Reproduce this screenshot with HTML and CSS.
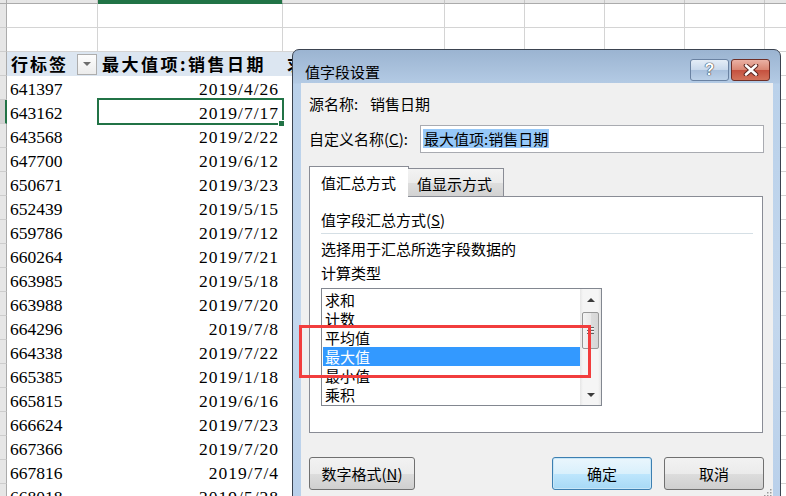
FILE: index.html
```html
<!DOCTYPE html>
<html lang="zh-CN">
<head>
<meta charset="utf-8">
<title>值字段设置</title>
<link rel="stylesheet" href="styles.css">
</head>
<body>
<div class="sheet">
  <div class="colheads">
    <div class="rh"></div><div class="ca"></div><div class="cb on"></div><div class="cc"></div><div class="rest"></div>
  </div>
  <div class="row"><div class="rh"></div><div class="ca grid"></div><div class="cb grid"></div><div class="cc grid"></div><div class="rest"></div></div>
  <div class="row"><div class="rh"></div><div class="ca grid"></div><div class="cb grid"></div><div class="cc grid"></div><div class="rest"></div></div>
  <div class="row"><div class="rh"></div>
    <div class="ca ph hd"><span>行标签</span><span class="dd"><span class="tri"></span></span></div>
    <div class="cb ph hd">最大值项:销售日期</div>
    <div class="cc ph hd">求</div><div class="rest"></div></div>
  <div class="row"><div class="rh"></div><div class="ca num">641397</div><div class="cb date">2019/4/26</div><div class="cc"></div><div class="rest"></div></div>
  <div class="row"><div class="rh on"></div><div class="ca num">643162</div><div class="cb date cur">2019/7/17</div><div class="cc"></div><div class="rest"></div></div>
  <div class="row"><div class="rh"></div><div class="ca num">643568</div><div class="cb date">2019/2/22</div><div class="cc"></div><div class="rest"></div></div>
  <div class="row"><div class="rh"></div><div class="ca num">647700</div><div class="cb date">2019/6/12</div><div class="cc"></div><div class="rest"></div></div>
  <div class="row"><div class="rh"></div><div class="ca num">650671</div><div class="cb date">2019/3/23</div><div class="cc"></div><div class="rest"></div></div>
  <div class="row"><div class="rh"></div><div class="ca num">652439</div><div class="cb date">2019/5/15</div><div class="cc"></div><div class="rest"></div></div>
  <div class="row"><div class="rh"></div><div class="ca num">659786</div><div class="cb date">2019/7/12</div><div class="cc"></div><div class="rest"></div></div>
  <div class="row"><div class="rh"></div><div class="ca num">660264</div><div class="cb date">2019/7/21</div><div class="cc"></div><div class="rest"></div></div>
  <div class="row"><div class="rh"></div><div class="ca num">663985</div><div class="cb date">2019/5/18</div><div class="cc"></div><div class="rest"></div></div>
  <div class="row"><div class="rh"></div><div class="ca num">663988</div><div class="cb date">2019/7/20</div><div class="cc"></div><div class="rest"></div></div>
  <div class="row"><div class="rh"></div><div class="ca num">664296</div><div class="cb date">2019/7/8</div><div class="cc"></div><div class="rest"></div></div>
  <div class="row"><div class="rh"></div><div class="ca num">664338</div><div class="cb date">2019/7/22</div><div class="cc"></div><div class="rest"></div></div>
  <div class="row"><div class="rh"></div><div class="ca num">665385</div><div class="cb date">2019/1/18</div><div class="cc"></div><div class="rest"></div></div>
  <div class="row"><div class="rh"></div><div class="ca num">665815</div><div class="cb date">2019/6/16</div><div class="cc"></div><div class="rest"></div></div>
  <div class="row"><div class="rh"></div><div class="ca num">666624</div><div class="cb date">2019/7/23</div><div class="cc"></div><div class="rest"></div></div>
  <div class="row"><div class="rh"></div><div class="ca num">667366</div><div class="cb date">2019/7/20</div><div class="cc"></div><div class="rest"></div></div>
  <div class="row"><div class="rh"></div><div class="ca num">667816</div><div class="cb date">2019/7/4</div><div class="cc"></div><div class="rest"></div></div>
  <div class="row"><div class="rh"></div><div class="ca num">668018</div><div class="cb date">2019/5/28</div><div class="cc"></div><div class="rest"></div></div>
</div>

<div class="dialog">
  <div class="titlebar">
    <span class="title">值字段设置</span>
    <div class="capbtns">
      <div class="capbtn help">?</div>
      <div class="capbtn close">
        <svg width="16" height="12" viewBox="0 0 16 12">
          <path d="M3 1.5 L13 10.5 M13 1.5 L3 10.5" stroke="#5a2620" stroke-width="4.6" stroke-linecap="round"/>
          <path d="M3 1.5 L13 10.5 M13 1.5 L3 10.5" stroke="#ffffff" stroke-width="2.6" stroke-linecap="round"/>
        </svg>
      </div>
    </div>
  </div>
  <div class="client">
    <div class="src"><span class="lbl">源名称:</span><span>销售日期</span></div>
    <div class="namerow">
      <span class="nlbl">自定义名称(<u>C</u>):</span>
      <div class="input"><span class="selected">最大值项:销售日期</span></div>
    </div>
    <div class="tabs">
      <div class="tab active">值汇总方式</div>
      <div class="tab inactive">值显示方式</div>
    </div>
    <div class="panel">
      <div class="group">值字段汇总方式(<u>S</u>)</div>
      <div class="sep"></div>
      <div class="desc">选择用于汇总所选字段数据的<br>计算类型</div>
      <div class="listbox">
        <ul class="items">
          <li>求和</li>
          <li>计数</li>
          <li>平均值</li>
          <li class="sel">最大值</li>
          <li>最小值</li>
          <li>乘积</li>
        </ul>
        <div class="vscroll">
          <div class="arr"><span class="up"></span></div>
          <div class="thumb"><span class="gripl"></span></div>
          <div class="track"></div>
          <div class="arr"><span class="down"></span></div>
        </div>
      </div>
    </div>
    <div class="buttons">
      <button class="btn numfmt">数字格式(<u>N</u>)</button>
      <button class="btn ok">确定</button>
      <button class="btn cancel">取消</button>
    </div>
    <svg class="grip" width="10" height="10" viewBox="0 0 10 10">
      <rect x="8" y="2" width="1.5" height="1.5" fill="#9a9a9a"/>
      <rect x="5" y="5" width="1.5" height="1.5" fill="#9a9a9a"/>
      <rect x="8" y="5" width="1.5" height="1.5" fill="#9a9a9a"/>
      <rect x="2" y="8" width="1.5" height="1.5" fill="#9a9a9a"/>
      <rect x="5" y="8" width="1.5" height="1.5" fill="#9a9a9a"/>
      <rect x="8" y="8" width="1.5" height="1.5" fill="#9a9a9a"/>
    </svg>
  </div>
</div>

<div class="annot"></div>
</body>
</html>
```

FILE: styles.css
```css
html, body {
  margin: 0;
  padding: 0;
}
body {
  width: 786px;
  height: 496px;
  overflow: hidden;
  position: relative;
  background: #ffffff;
  font-family: "Noto Sans CJK SC", "Liberation Sans", sans-serif;
  color: #000;
}

/* ---------- spreadsheet ---------- */
.sheet {
  display: flex;
  flex-direction: column;
}
.colheads {
  display: flex;
  height: 4px;
  flex: none;
}
.colheads > div {
  height: 4px;
  box-sizing: border-box;
  border-bottom: 1px solid #ababab;
  border-right: 1px solid #c6c6c6;
  background: #e6e6e6;
  flex: none;
}
.colheads .on {
  background: #217346;
  border-bottom-color: #217346;
}
.colheads .rest {
  flex: 1;
  background: linear-gradient(to left, #c6c6c6 1px, #e6e6e6 1px) 0 0 / 80px 100% repeat-x;
  border-right: none;
}
.row {
  display: flex;
  height: 24px;
  flex: none;
}
.row > div {
  box-sizing: border-box;
  height: 24px;
  flex: none;
}
.rh {
  width: 7px;
  background: #e6e6e6;
  border-right: 1px solid #ababab;
  border-bottom: 1px solid #cdcdcd;
}
.row .rh.on {
  background: #d2d2d2;
  border-right: 2px solid #217346;
}
.colheads .rh {
  width: 7px;
  border-right-color: #ababab;
}
.ca { width: 91px; }
.cb { width: 185px; }
.cc { width: 162px; }
.grid {
  border-right: 1px solid #d4d4d4;
  border-bottom: 1px solid #d4d4d4;
}
.row .rest {
  flex: 1;
  border-bottom: 1px solid #d4d4d4;
  background: linear-gradient(to left, #d4d4d4 1px, transparent 1px) 0 0 / 80px 100% repeat-x;
}
.ph {
  background: #dce6f1;
}
.hd {
  font-family: "Noto Sans CJK SC", sans-serif;
  font-weight: 700;
  font-size: 17px;
  letter-spacing: 2.5px;
  line-height: 24px;
  padding-left: 4px;
  white-space: nowrap;
  overflow: hidden;
}
.row .ca.hd {
  display: flex;
  justify-content: space-between;
  align-items: center;
  padding-right: 1px;
  letter-spacing: 2px;
}
.dd {
  width: 20px;
  height: 21px;
  box-sizing: border-box;
  border: 1px solid #adadad;
  background: linear-gradient(#fdfdfd, #ececec);
  display: flex;
  align-items: center;
  justify-content: center;
}
.tri {
  width: 0;
  height: 0;
  border-left: 4px solid transparent;
  border-right: 4px solid transparent;
  border-top: 4px solid #6d6d6d;
}
.num, .date {
  font-family: "Liberation Serif", serif;
  font-size: 17.5px;
  line-height: 26px;
  white-space: nowrap;
}
.num {
  padding-left: 3px;
}
.date {
  text-align: right;
  padding-right: 4px;
  letter-spacing: 1px;
}
.cur {
  position: relative;
}
.cur::after {
  content: "";
  position: absolute;
  top: -2px;
  left: -1px;
  right: -1px;
  bottom: -1px;
  border: 2px solid #217346;
}
.cur::before {
  content: "";
  position: absolute;
  right: -2px;
  bottom: -3px;
  width: 5px;
  height: 5px;
  background: #217346;
  border: 1px solid #fff;
  z-index: 1;
}

/* ---------- dialog ---------- */
.dialog {
  position: absolute;
  left: 292px;
  top: 49px;
  width: 489px;
  height: 457px;
  box-sizing: border-box;
  border: 1px solid #3b4350;
  border-radius: 7px 7px 0 0;
  background: linear-gradient(#9bb4d1 0, #b3cae4 33px, #bad1ea 34px, #c3d7ed 60%, #b9d0ea 100%);
  padding: 0 7px 7px 8px;
  display: flex;
  flex-direction: column;
  font-size: 15px;
}
.titlebar {
  height: 33px;
  flex: none;
  display: flex;
  justify-content: space-between;
  align-items: flex-start;
}
.title {
  padding: 11px 0 0 4px;
  line-height: 22px;
  font-size: 15px;
}
.capbtns {
  display: flex;
  gap: 2px;
  margin-top: 9px;
  margin-right: 3px;
}
.capbtn {
  width: 39px;
  height: 22px;
  box-sizing: border-box;
  border-radius: 3px;
  display: flex;
  align-items: center;
  justify-content: center;
}
.help {
  border: 1px solid #6a82a2;
  background: linear-gradient(#e4edf7 0%, #c9d9ec 48%, #a9c0dc 52%, #bcd1e8 100%);
  color: #fff;
  font-family: "Liberation Sans", sans-serif;
  font-weight: 700;
  font-size: 16px;
  line-height: 20px;
  text-shadow: 0 0 1px #2f3e52, 0 0 1px #2f3e52, 0 0 1px #2f3e52;
}
.close {
  border: 1px solid #6f2f27;
  background: linear-gradient(#eab1a4 0%, #d98774 48%, #c5513f 52%, #d2735b 100%);
}
.client {
  flex: 1;
  position: relative;
  background: #f0f0f0;
  padding: 11px 9px 0 8px;
  box-sizing: border-box;
}
.src {
  display: flex;
  line-height: 20px;
}
.src .lbl {
  width: 61px;
}
.namerow {
  display: flex;
  align-items: center;
  margin-top: 11px;
}
.nlbl {
  width: 111px;
  line-height: 20px;
}
.input {
  width: 344px;
  height: 28px;
  box-sizing: border-box;
  border: 1px solid #a9abb1;
  background: #fff;
  padding: 2px 2px;
}
.selected {
  display: inline-block;
  background: #96c8f8;
  line-height: 19px;
  padding: 0 1px;
}
.tabs {
  display: flex;
  align-items: flex-end;
  margin-top: 13px;
  height: 30px;
  position: relative;
  z-index: 1;
}
.tab {
  box-sizing: border-box;
  border: 1px solid #898c95;
  border-bottom: none;
  line-height: 20px;
}
.tab.active {
  width: 100px;
  height: 31px;
  margin-bottom: -1px;
  background: #fff;
  padding: 6px 0 0 11px;
}
.tab.inactive {
  width: 96px;
  height: 28px;
  margin-left: -1px;
  background: linear-gradient(#f3f3f3 0%, #ebebeb 50%, #dedede 51%, #d2d2d2 100%);
  padding: 5px 0 0 9px;
  border-left: none;
}
.panel {
  width: 454px;
  height: 237px;
  box-sizing: border-box;
  border: 1px solid #898c95;
  background: #fff;
  padding: 13px 9px 0 11px;
}
.group {
  line-height: 20px;
}
.sep {
  height: 1px;
  background: #d5dfe5;
  margin-top: 3px;
}
.desc {
  margin-top: 3px;
  line-height: 24px;
}
.listbox {
  margin-top: 3px;
  width: 281px;
  height: 118px;
  box-sizing: border-box;
  border: 1px solid #828790;
  display: flex;
  background: #fff;
}
.items {
  list-style: none;
  margin: 0;
  padding: 1px 0 0 1px;
  flex: 1;
}
.items li {
  height: 19px;
  line-height: 19px;
  padding-left: 2px;
}
.items li.sel {
  background: #3399ff;
  color: #fff;
}
.vscroll {
  width: 21px;
  flex: none;
  display: flex;
  flex-direction: column;
  background: linear-gradient(to right, #e6e6e6 0, #f5f5f5 3px, #f5f5f5 18px, #e6e6e6 21px);
}
.arr {
  height: 21px;
  flex: none;
  display: flex;
  align-items: center;
  justify-content: center;
}
.up, .down {
  width: 0;
  height: 0;
  border-left: 4px solid transparent;
  border-right: 4px solid transparent;
}
.up {
  border-bottom: 4px solid #3c3c3c;
}
.down {
  border-top: 4px solid #3c3c3c;
}
.thumb {
  margin: 2px 2px 0 2px;
  height: 37px;
  flex: none;
  box-sizing: border-box;
  border: 1px solid #979797;
  border-radius: 2px;
  background: linear-gradient(to right, #f4f4f4 0%, #e9e9e9 50%, #dcdcdc 51%, #d6d6d6 100%);
  display: flex;
  align-items: center;
  justify-content: center;
}
.gripl {
  width: 7px;
  height: 7px;
  background: repeating-linear-gradient(#5f5f5f 0 1px, #f6f6f6 1px 2px, transparent 2px 3px);
}
.track {
  flex: 1;
}
.buttons {
  display: flex;
  margin-top: 24px;
}
.btn {
  height: 33px;
  box-sizing: border-box;
  border: 1px solid #707070;
  border-radius: 3px;
  background: linear-gradient(#f2f2f2 0%, #ebebeb 50%, #dddddd 51%, #cfcfcf 100%);
  font-family: "Noto Sans CJK SC", sans-serif;
  font-size: 15px;
  color: #000;
  padding: 0;
  line-height: 20px;
}
.numfmt {
  width: 106px;
}
.ok {
  width: 100px;
  margin-left: auto;
  border-color: #3c7fb1;
  box-shadow: inset 0 0 0 1px #c7e6f7;
  background: linear-gradient(#eaf6fd 0%, #d9f0fc 50%, #bee6fd 51%, #a7d9f5 100%);
}
.cancel {
  width: 100px;
  margin-left: 12px;
}
.grip {
  position: absolute;
  right: 1px;
  bottom: 1px;
}

/* annotation */
.annot {
  position: absolute;
  left: 299px;
  top: 325px;
  width: 292px;
  height: 53px;
  box-sizing: border-box;
  border: 3px solid #f23d3d;
}
```
